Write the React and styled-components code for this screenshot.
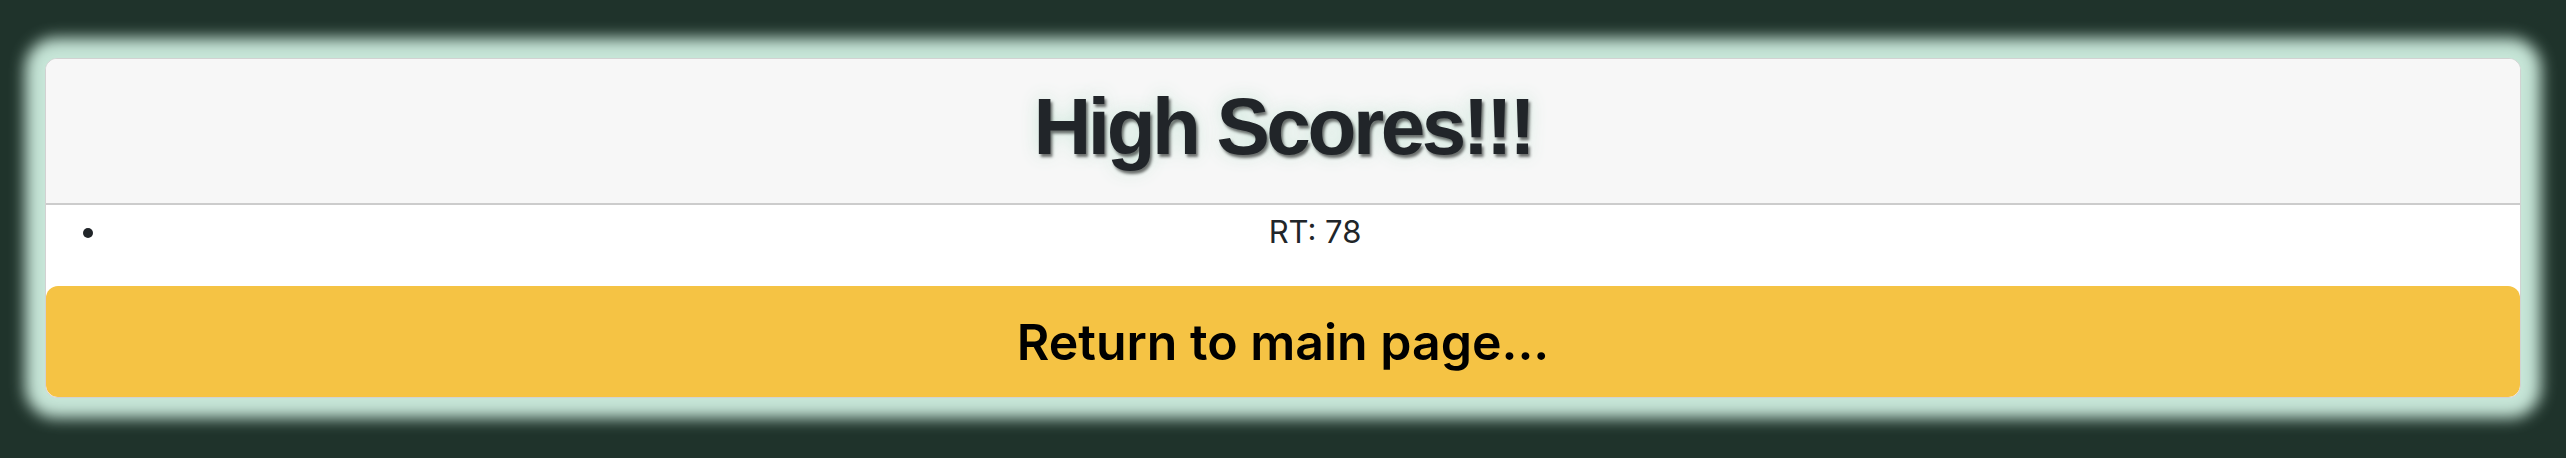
import React from 'react';
import styled, { createGlobalStyle } from 'styled-components';

const GlobalStyle = createGlobalStyle`
  html, body {
    margin: 0;
    padding: 0;
    background: #1f332b;
  }
  * {
    box-sizing: border-box;
  }
`;

const Page = styled.div`
  min-height: 458px;
  padding: 58px 45px 60px;
  background: #1f332b;
`;

const Card = styled.div`
  display: flex;
  flex-direction: column;
  background: #fff;
  border: 1px solid #d2d2d2;
  border-radius: 12px;
  overflow: hidden;
  box-shadow: 0 0 15px 20px #c6e5d7;
`;

const Header = styled.div`
  height: 146px;
  display: flex;
  align-items: center;
  justify-content: center;
  background: #f7f7f7;
  border-bottom: 2px solid #cccccc;
`;

const Title = styled.h1`
  margin: 0 0 8px;
  font-family: "Liberation Sans", Arial, sans-serif;
  font-weight: 700;
  font-size: 80px;
  letter-spacing: -3.4px;
  color: #212529;
  text-shadow: 2px 3px 3px rgba(0, 0, 0, 0.55), 0 0 18px rgba(198, 229, 215, 0.9);
`;

const ScoreList = styled.ul`
  margin: 0;
  padding: 4px 0 32px 64px;
  font-family: Inter, "Noto Sans", sans-serif;
  color: #212529;
`;

const ScoreItem = styled.li`
  font-size: 31px;
  line-height: 45px;
  text-align: center;
`;

const ReturnButton = styled.button`
  height: 111px;
  margin: 0;
  border: none;
  border-radius: 12px;
  background: #f5c344;
  color: #000;
  font-family: Inter, "Noto Sans", sans-serif;
  font-size: 50px;
  font-weight: 600;
  cursor: pointer;
`;

const scores = [{ name: 'RT', score: 78 }];

export default function App() {
  return (
    <>
      <GlobalStyle />
      <Page>
        <Card>
          <Header>
            <Title>High Scores!!!</Title>
          </Header>
          <ScoreList>
            {scores.map(s => (
              <ScoreItem key={s.name}>{s.name}: {s.score}</ScoreItem>
            ))}
          </ScoreList>
          <ReturnButton>Return to main page...</ReturnButton>
        </Card>
      </Page>
    </>
  );
}
